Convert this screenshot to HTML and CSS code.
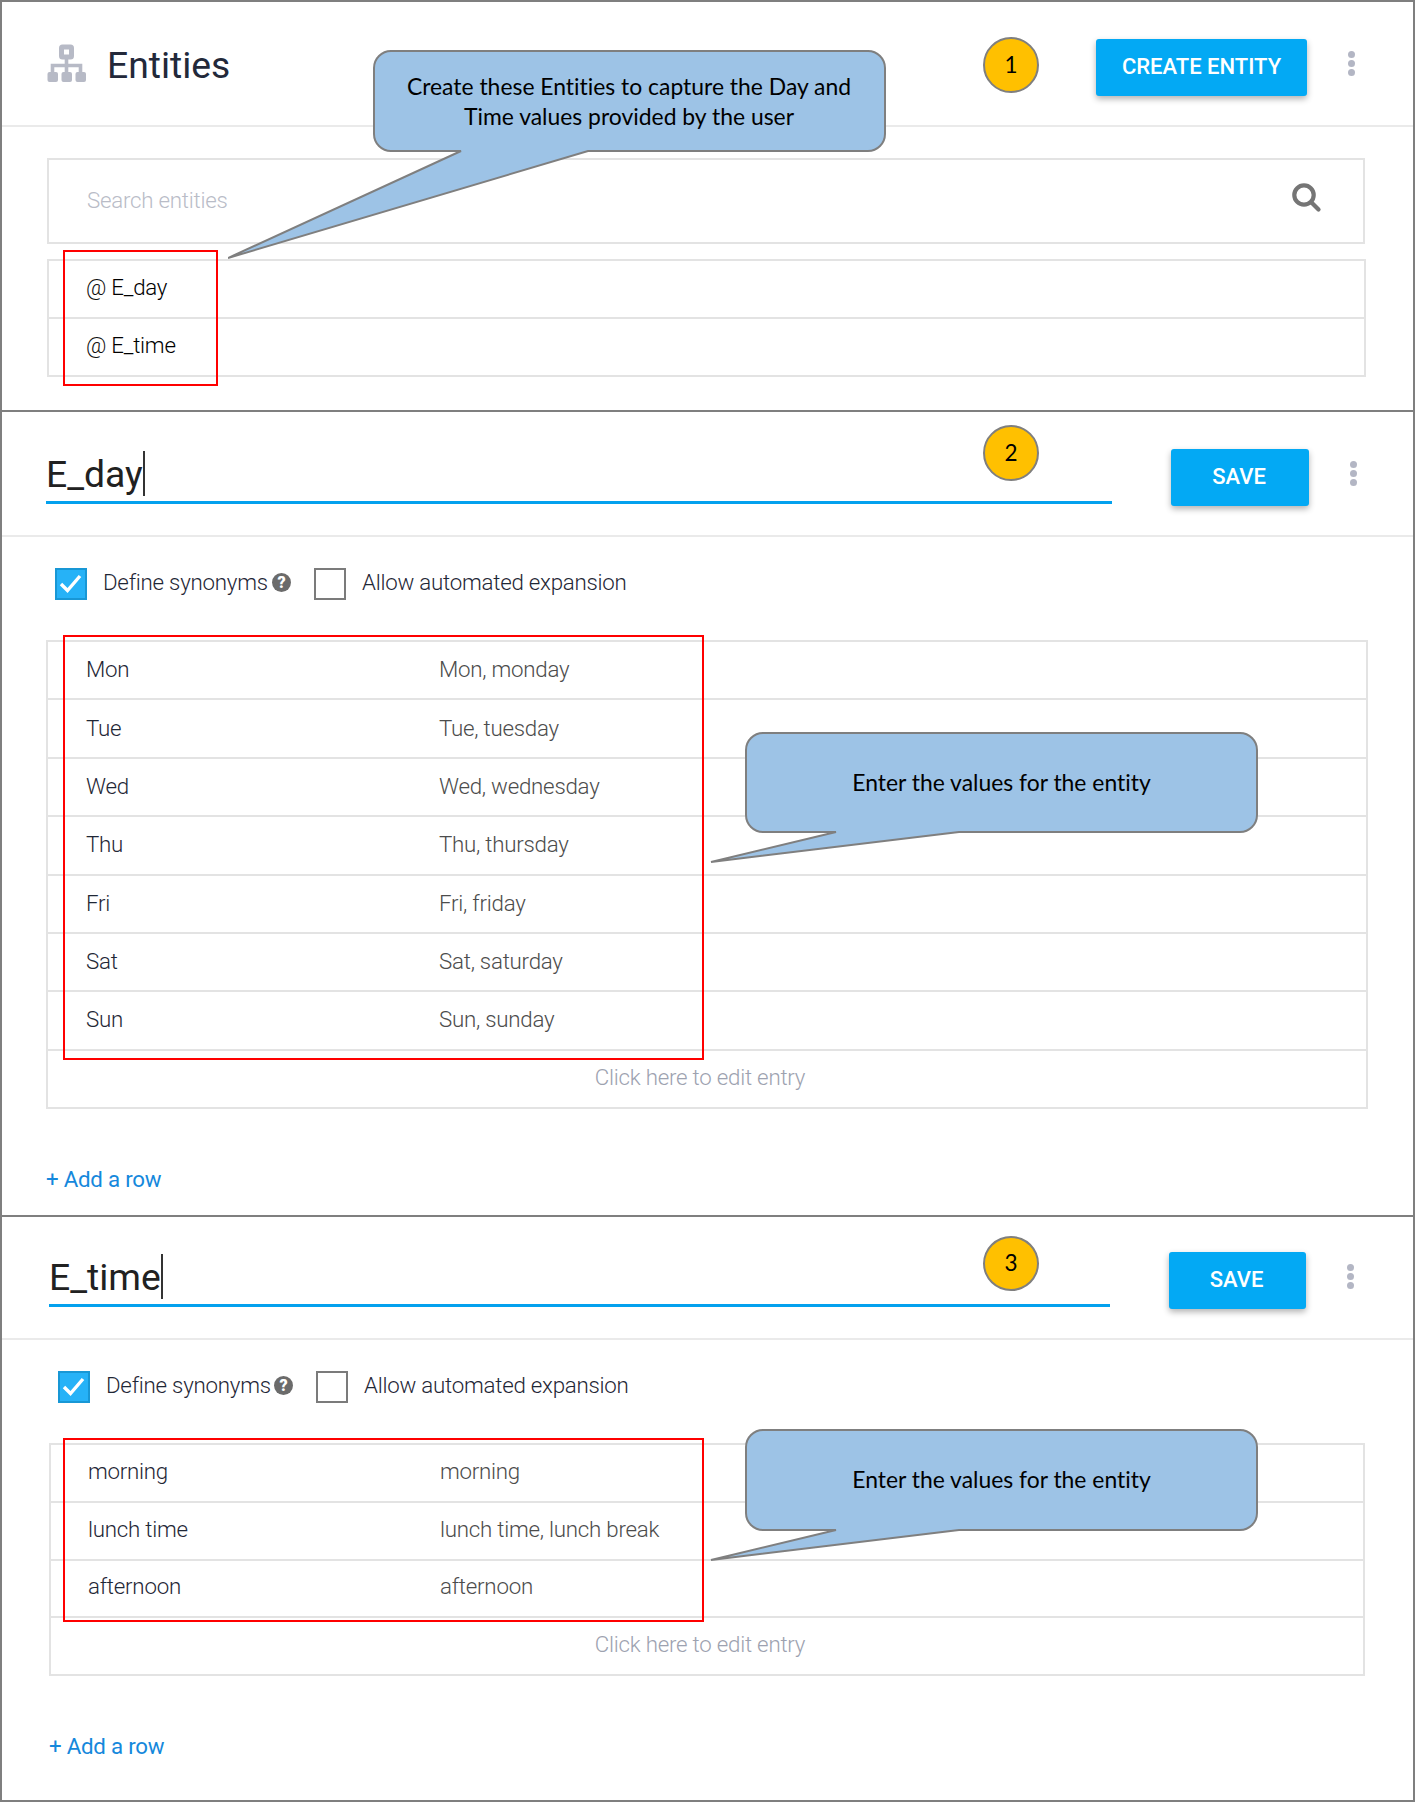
FILE: index.html
```html
<!DOCTYPE html>
<html lang="en">
<head>
<meta charset="utf-8">
<title>Entities</title>
<link rel="stylesheet" href="styles.css">
</head>
<body>
<main class="board">

  <section class="panel panel-list">
    <header class="head">
      <svg class="sitemap" width="40" height="40" viewBox="0 0 40 40">
        <path class="sitemap-line" d="M19.500 13v20M5.500 31v-9.500h28v9.500"/>
        <rect class="sitemap-top" x="14.500" y="3" width="10" height="10" rx="1"/>
        <rect x="0.500" y="28" width="10.500" height="10" rx="2"/>
        <rect x="14.500" y="28" width="10.500" height="10" rx="2"/>
        <rect x="28.500" y="28" width="10.500" height="10" rx="2"/>
      </svg>
      <h1 class="title">Entities</h1>
      <button class="btn btn-create">CREATE ENTITY</button>
      <span class="kebab"><i></i><i></i><i></i></span>
    </header>
    <div class="search">
      <span class="placeholder">Search entities</span>
      <svg class="magnifier" width="30" height="30" viewBox="0 0 30 30"><circle cx="12" cy="12" r="9.700"/><path d="M19.500 19.500l7 7"/></svg>
    </div>
    <ul class="entities">
      <li>@ <b>E_day</b></li>
      <li>@ <b>E_time</b></li>
    </ul>
    <div class="outline outline-1"></div>
    <div class="step step-1">1</div>
    <div class="callout callout-1">
      <svg width="660" height="212" viewBox="0 0 660 212"><path d="M163 1H640A17 17 0 0 1 657 18V84A17 17 0 0 1 640 101H360L0 208L233 101H163A17 17 0 0 1 146 84V18A17 17 0 0 1 163 1Z"/></svg>
      <p>Create these Entities to capture the Day and<br>Time values provided by the user</p>
    </div>
  </section>

  <section class="panel panel-day">
    <header class="head">
      <div class="name"><span>E_day</span><i class="caret"></i></div>
      <button class="btn">SAVE</button>
      <span class="kebab"><i></i><i></i><i></i></span>
    </header>
    <div class="options">
      <span class="box checked"><svg width="28" height="28" viewBox="0 0 28 28"><path d="M4 14l6.500 6.500L23 6"/></svg></span>
      <span class="label">Define synonyms</span>
      <span class="help">?</span>
      <span class="box"></span>
      <span class="label">Allow automated expansion</span>
    </div>
    <div class="table">
      <div class="row"><span>Mon</span><span>Mon, monday</span></div>
      <div class="row"><span>Tue</span><span>Tue, tuesday</span></div>
      <div class="row"><span>Wed</span><span>Wed, wednesday</span></div>
      <div class="row"><span>Thu</span><span>Thu, thursday</span></div>
      <div class="row"><span>Fri</span><span>Fri, friday</span></div>
      <div class="row"><span>Sat</span><span>Sat, saturday</span></div>
      <div class="row"><span>Sun</span><span>Sun, sunday</span></div>
      <div class="row hint">Click here to edit entry</div>
    </div>
    <a class="add">+ Add a row</a>
    <div class="outline outline-2"></div>
    <div class="step step-2">2</div>
    <div class="callout callout-2">
      <svg width="550" height="134" viewBox="0 0 550 134"><path d="M53 1H530A17 17 0 0 1 547 18V83A17 17 0 0 1 530 100H249L1 130L126 100H53A17 17 0 0 1 36 83V18A17 17 0 0 1 53 1Z"/></svg>
      <p>Enter the values for the entity</p>
    </div>
  </section>

  <section class="panel panel-time">
    <header class="head">
      <div class="name"><span>E_time</span><i class="caret"></i></div>
      <button class="btn">SAVE</button>
      <span class="kebab"><i></i><i></i><i></i></span>
    </header>
    <div class="options">
      <span class="box checked"><svg width="28" height="28" viewBox="0 0 28 28"><path d="M4 14l6.500 6.500L23 6"/></svg></span>
      <span class="label">Define synonyms</span>
      <span class="help">?</span>
      <span class="box"></span>
      <span class="label">Allow automated expansion</span>
    </div>
    <div class="table">
      <div class="row"><span>morning</span><span>morning</span></div>
      <div class="row"><span>lunch time</span><span>lunch time, lunch break</span></div>
      <div class="row"><span>afternoon</span><span>afternoon</span></div>
      <div class="row hint">Click here to edit entry</div>
    </div>
    <a class="add">+ Add a row</a>
    <div class="outline outline-3"></div>
    <div class="step step-3">3</div>
    <div class="callout callout-2 callout-3">
      <svg width="550" height="134" viewBox="0 0 550 134"><path d="M53 1H530A17 17 0 0 1 547 18V84A17 17 0 0 1 530 101H249L1 131L126 101H53A17 17 0 0 1 36 84V18A17 17 0 0 1 53 1Z"/></svg>
      <p>Enter the values for the entity</p>
    </div>
  </section>

</main>
</body>
</html>
```

FILE: styles.css
```css
* { box-sizing: border-box; }

body {
  margin: 0;
  background: #fff;
  font-family: Roboto, "Liberation Sans", sans-serif;
  font-size: 22.3px;
  font-weight: 300;
  letter-spacing: -0.24px;
  color: #1f2736;
}

.board {
  width: 1415px;
  height: 1802px;
  border: 2px solid #7f7f7f;
}

.panel { position: relative; }
.panel-list { height: 410px; border-bottom: 2px solid #7f7f7f; }
.panel-day { height: 805px; border-bottom: 2px solid #7f7f7f; }
.panel-time { height: 583px; }

/* Header bar */
.head {
  display: flex;
  align-items: flex-start;
  border-bottom: 2px solid #eaeaea;
}
.panel-list .head { height: 125px; padding: 37px 58px 0 45px; }
.panel-day .head { height: 125px; padding: 37px 54px 0 44px; }
.panel-time .head { height: 123px; padding: 35px 58px 0 47px; }

.sitemap { flex: none; margin-top: 5px; fill: #b7bac6; }
.sitemap-line { fill: none; stroke: #b7bac6; stroke-width: 3.6; }
.sitemap-top { fill: #fff; stroke: #b7bac6; stroke-width: 5; }

.title {
  flex: 1;
  margin: 4px 0 0 20px;
  font-size: 37.3px;
  font-weight: 400;
  line-height: 44px;
  letter-spacing: 0;
  color: #23293a;
}

.btn {
  flex: none;
  width: 138px;
  height: 57px;
  padding: 0 2px 2px 0;
  border: 0;
  border-radius: 3px;
  background: #03a9f4;
  box-shadow: 0 3px 6px rgba(0, 0, 0, .3);
  font: 500 22px/55px Roboto, sans-serif;
  color: #fff;
}
.btn-create { width: 211px; padding-right: 0; }
.panel-time .btn { width: 137px; }

.kebab {
  flex: none;
  display: grid;
  gap: 2px;
  width: 7px;
  margin: 12px 0 0 41px;
}
.kebab i { width: 7px; height: 7px; border-radius: 50%; background: #b3b6c4; }

.name {
  display: flex;
  width: 1066px;
  height: 55px;
  margin-right: 59px;
  border-bottom: 3px solid #03a1ee;
  font-size: 37.3px;
  font-weight: 400;
  line-height: 50px;
  letter-spacing: 0;
  color: #212121;
}
.panel-time .name { width: 1061px; }
.caret { width: 2px; height: 45px; margin-top: 2px; background: #333; }

/* Search and entity list */
.search {
  display: flex;
  justify-content: space-between;
  align-items: flex-start;
  width: 1318px;
  height: 86px;
  margin: 31px 0 15px 45px;
  padding: 22px 41px 0 38px;
  border: 2px solid #e3e3e3;
}
.placeholder { color: #b9bcc7; line-height: 36px; }
.magnifier { margin-top: 1px; fill: none; stroke: #757575; stroke-width: 4.2; stroke-linecap: round; }

.entities {
  width: 1319px;
  margin: 0 0 0 45px;
  padding: 0;
  border: 2px solid #e3e3e3;
  list-style: none;
  color: #111;
}
.entities li { height: 56px; padding-left: 37px; line-height: 52px; }
.entities li:first-child { height: 58px; border-bottom: 2px solid #e3e3e3; }
.entities b { font-weight: 300; color: #000; }

/* Option row */
.options {
  display: flex;
  align-items: center;
  height: 32px;
  margin: 31px 0 0 53px;
}
.panel-time .options { margin-left: 56px; }
.box { flex: none; width: 32px; height: 32px; border: 2px solid #7b7b7b; }
.checked { border-color: #1897d5; background: #26b2f7; }
.checked svg { display: block; fill: none; stroke: #fff; stroke-width: 3.4; }
.label { width: 163px; margin: -5px 6px 0 16px; white-space: nowrap; }
.panel-time .label { width: 162px; }
.help {
  flex: none;
  width: 19px;
  height: 19px;
  margin: -3px 23px 0 0;
  border-radius: 50%;
  background: #6b6b6b;
  font: 900 16px/19px Roboto, sans-serif;
  text-align: center;
  color: #fff;
}

/* Synonym table */
.table {
  display: grid;
  grid-auto-rows: 1fr;
  width: 1322px;
  height: 469px;
  margin: 40px 0 0 44px;
  border: 2px solid #e3e3e3;
  border-bottom: 0;
}
.panel-time .table { width: 1316px; height: 233px; margin-left: 47px; }
.row {
  display: grid;
  grid-template-columns: 353px 1fr;
  align-items: center;
  padding: 0 0 2px 38px;
  border-bottom: 2px solid #e3e3e3;
}
.panel-time .row { grid-template-columns: 352px 1fr; padding: 0 0 4px 37px; }
.row span + span { color: #4c4c4c; }
.table .row.hint { display: block; padding: 0 14px 0 0; line-height: 52px; text-align: center; color: #9da2b0; }

.add {
  display: block;
  margin: 56px 0 0 44px;
  font-weight: 400;
  line-height: 28px;
  color: #1588dc;
}
.panel-time .add { margin-left: 47px; }

/* Annotations laid over the panels */
.outline { position: absolute; left: 61px; width: 641px; border: 2px solid #f00; }
.outline-1 { top: 248px; width: 155px; height: 136px; }
.outline-2 { top: 223px; height: 425px; }
.outline-3 { top: 221px; height: 184px; }

.step {
  position: absolute;
  left: 981px;
  width: 56px;
  height: 56px;
  border: 2px solid #7f7f7f;
  border-radius: 50%;
  background: #ffc000;
  font: 400 22.500px/51px Lato, sans-serif;
  text-align: center;
  color: #000;
}
.step-1 { top: 35px; }
.step-2 { top: 13px; }
.step-3 { top: 19px; height: 55px; line-height: 49px; }

.callout {
  position: absolute;
  font: 400 22.9px/30px Lato, sans-serif;
  font-variant-ligatures: none;
  letter-spacing: 0;
  color: #000;
}
.callout svg { display: block; fill: #9dc3e6; stroke: #7f7f7f; stroke-width: 2; }
.callout p { position: absolute; margin: 0; text-align: center; white-space: nowrap; }
.callout-1 { left: 226px; top: 48px; }
.callout-1 p { left: 146px; width: 510px; top: 21px; }
.callout-2 { left: 708px; top: 320px; }
.callout-2 p { left: 36px; width: 511px; top: 35px; }
.callout-3 { top: 212px; }
```
